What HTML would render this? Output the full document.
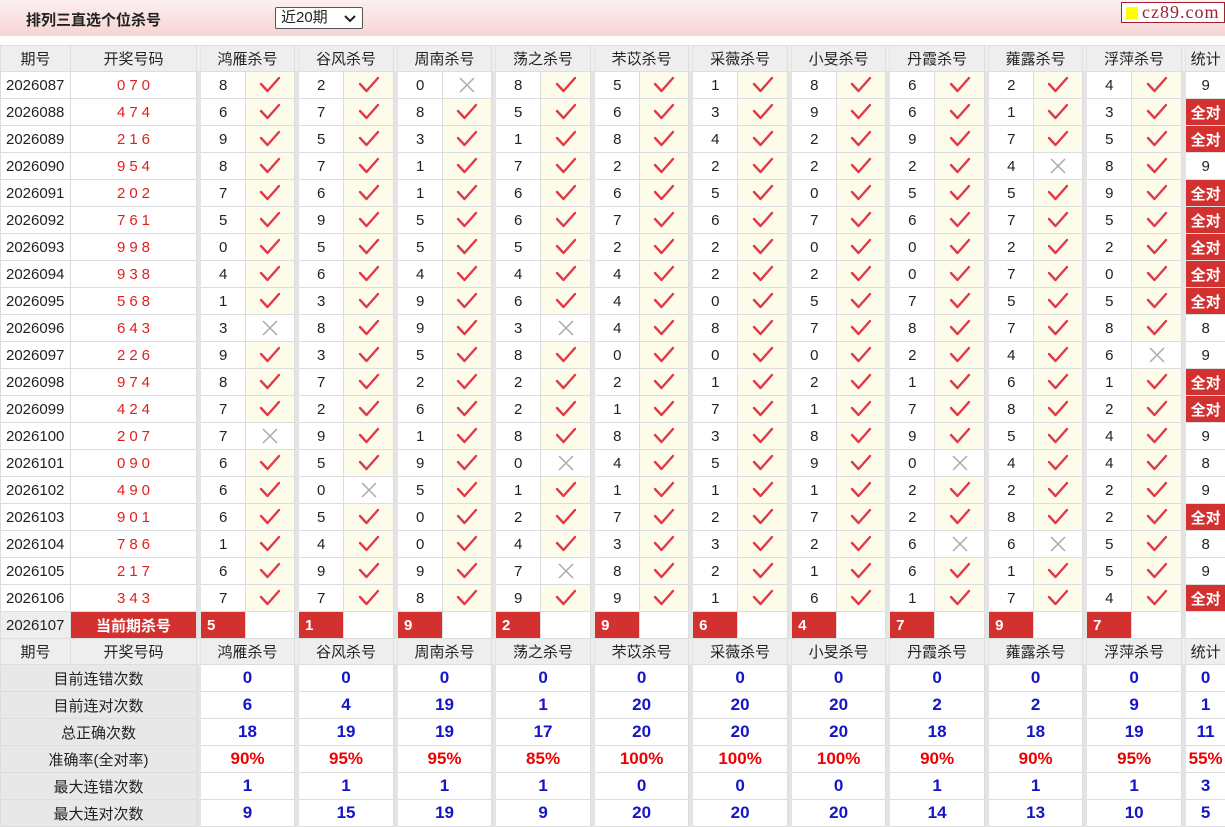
<!DOCTYPE html><html><head><meta charset="utf-8"><style>
*{margin:0;padding:0;box-sizing:border-box}
body{width:1225px;height:827px;overflow:hidden;background:#fff;font-family:"Liberation Sans","Noto Sans CJK SC",sans-serif;color:#222}
.top{position:absolute;left:0;top:0;width:1225px;height:36px;background:linear-gradient(#fdf0f0,#f6d4d4);}
.title{position:absolute;left:26px;top:9px;font-size:15px;font-weight:bold;color:#222}
.sel{position:absolute;left:275px;top:7px;width:88px;height:22px;border:1px solid #555;border-radius:2px;background:#fff;font-size:15px;padding-left:5px;line-height:20px}
.sel svg{position:absolute;right:6px;top:7px}
.logo{position:absolute;left:1121px;top:2px;width:104px;height:21px;border:1px solid #a02030;background:#fff;font-family:"Liberation Serif",serif;font-size:18px;color:#a02030;line-height:18px;padding-left:20px;letter-spacing:1px}
.logo i{position:absolute;left:4px;top:4px;width:12px;height:12px;background:#ff0}
table{position:absolute;left:0;top:45px;border-collapse:collapse;table-layout:fixed;width:1225px}
td{border:1px solid #ddd;height:27px;font-size:15px;white-space:nowrap;overflow:hidden;padding:0}
tr.h td{background:#eee;text-align:center;height:26px}
td.s{background:#e4e4e4;border-color:#e4e4e4;padding:0}
td.p{padding-left:5px}
td.k{text-align:center;color:#e02020;letter-spacing:4px;padding-left:4px}
td.n{padding-left:18px}
td.y{background:#fdfbea;text-align:center}
td.x{text-align:center}
td.t{text-align:center}
td.q{background:#d33030;color:#fff;font-weight:bold;text-align:center}
td.r{background:#d33030;color:#fff;font-weight:bold;padding-left:6px}
td.L{background:#e8e8e8;text-align:center}
td.b{text-align:center;color:#1515c8;font-weight:bold;font-size:17px}
td.c{text-align:center;color:#e00;font-weight:bold;font-size:17px}
svg.i{width:22px;height:20px;display:block;margin:0 auto}
</style></head><body>
<svg width="0" height="0" style="position:absolute"><defs>
<symbol id="c" viewBox="0 0 22 20"><path d="M2 9 L8.5 16 L20 3" fill="none" stroke="#e03a48" stroke-width="2.4" stroke-linecap="round" stroke-linejoin="round"/></symbol>
<symbol id="x" viewBox="0 0 22 20"><path d="M4 3 L18 17 M18 3 L4 17" fill="none" stroke="#aaa" stroke-width="1.5"/></symbol>
</defs></svg>
<div class="top"></div>
<div class="title">排列三直选个位杀号</div>
<div class="sel">近20期<svg width="12" height="8" viewBox="0 0 12 8"><path d="M1 1 L6 6 L11 1" fill="none" stroke="#222" stroke-width="2"/></svg></div>
<div class="logo"><i></i>cz89.com</div>
<table>
<colgroup><col style="width:70px"><col style="width:126px"><col style="width:4px">
<col style="width:45px"><col style="width:49px"><col style="width:4px">
<col style="width:45px"><col style="width:50px"><col style="width:4px">
<col style="width:45px"><col style="width:49px"><col style="width:4px">
<col style="width:45px"><col style="width:50px"><col style="width:4px">
<col style="width:45px"><col style="width:49px"><col style="width:4px">
<col style="width:45px"><col style="width:50px"><col style="width:4px">
<col style="width:45px"><col style="width:49px"><col style="width:4px">
<col style="width:45px"><col style="width:50px"><col style="width:4px">
<col style="width:45px"><col style="width:49px"><col style="width:4px">
<col style="width:45px"><col style="width:50px"><col style="width:4px">
<col style="width:40px"></colgroup>
<tr class="h"><td>期号</td><td>开奖号码</td><td class="s"></td><td colspan="2">鸿雁杀号</td><td class="s"></td><td colspan="2">谷风杀号</td><td class="s"></td><td colspan="2">周南杀号</td><td class="s"></td><td colspan="2">荡之杀号</td><td class="s"></td><td colspan="2">芣苡杀号</td><td class="s"></td><td colspan="2">采薇杀号</td><td class="s"></td><td colspan="2">小旻杀号</td><td class="s"></td><td colspan="2">丹霞杀号</td><td class="s"></td><td colspan="2">蕹露杀号</td><td class="s"></td><td colspan="2">浮萍杀号</td><td class="s"></td><td>统计</td></tr>
<tr><td class="p">2026087</td><td class="k">070</td><td class="s"></td><td class="n">8</td><td class="y"><svg class="i"><use href="#c"/></svg></td><td class="s"></td><td class="n">2</td><td class="y"><svg class="i"><use href="#c"/></svg></td><td class="s"></td><td class="n">0</td><td class="x"><svg class="i"><use href="#x"/></svg></td><td class="s"></td><td class="n">8</td><td class="y"><svg class="i"><use href="#c"/></svg></td><td class="s"></td><td class="n">5</td><td class="y"><svg class="i"><use href="#c"/></svg></td><td class="s"></td><td class="n">1</td><td class="y"><svg class="i"><use href="#c"/></svg></td><td class="s"></td><td class="n">8</td><td class="y"><svg class="i"><use href="#c"/></svg></td><td class="s"></td><td class="n">6</td><td class="y"><svg class="i"><use href="#c"/></svg></td><td class="s"></td><td class="n">2</td><td class="y"><svg class="i"><use href="#c"/></svg></td><td class="s"></td><td class="n">4</td><td class="y"><svg class="i"><use href="#c"/></svg></td><td class="s"></td><td class="t">9</td></tr>
<tr><td class="p">2026088</td><td class="k">474</td><td class="s"></td><td class="n">6</td><td class="y"><svg class="i"><use href="#c"/></svg></td><td class="s"></td><td class="n">7</td><td class="y"><svg class="i"><use href="#c"/></svg></td><td class="s"></td><td class="n">8</td><td class="y"><svg class="i"><use href="#c"/></svg></td><td class="s"></td><td class="n">5</td><td class="y"><svg class="i"><use href="#c"/></svg></td><td class="s"></td><td class="n">6</td><td class="y"><svg class="i"><use href="#c"/></svg></td><td class="s"></td><td class="n">3</td><td class="y"><svg class="i"><use href="#c"/></svg></td><td class="s"></td><td class="n">9</td><td class="y"><svg class="i"><use href="#c"/></svg></td><td class="s"></td><td class="n">6</td><td class="y"><svg class="i"><use href="#c"/></svg></td><td class="s"></td><td class="n">1</td><td class="y"><svg class="i"><use href="#c"/></svg></td><td class="s"></td><td class="n">3</td><td class="y"><svg class="i"><use href="#c"/></svg></td><td class="s"></td><td class="q">全对</td></tr>
<tr><td class="p">2026089</td><td class="k">216</td><td class="s"></td><td class="n">9</td><td class="y"><svg class="i"><use href="#c"/></svg></td><td class="s"></td><td class="n">5</td><td class="y"><svg class="i"><use href="#c"/></svg></td><td class="s"></td><td class="n">3</td><td class="y"><svg class="i"><use href="#c"/></svg></td><td class="s"></td><td class="n">1</td><td class="y"><svg class="i"><use href="#c"/></svg></td><td class="s"></td><td class="n">8</td><td class="y"><svg class="i"><use href="#c"/></svg></td><td class="s"></td><td class="n">4</td><td class="y"><svg class="i"><use href="#c"/></svg></td><td class="s"></td><td class="n">2</td><td class="y"><svg class="i"><use href="#c"/></svg></td><td class="s"></td><td class="n">9</td><td class="y"><svg class="i"><use href="#c"/></svg></td><td class="s"></td><td class="n">7</td><td class="y"><svg class="i"><use href="#c"/></svg></td><td class="s"></td><td class="n">5</td><td class="y"><svg class="i"><use href="#c"/></svg></td><td class="s"></td><td class="q">全对</td></tr>
<tr><td class="p">2026090</td><td class="k">954</td><td class="s"></td><td class="n">8</td><td class="y"><svg class="i"><use href="#c"/></svg></td><td class="s"></td><td class="n">7</td><td class="y"><svg class="i"><use href="#c"/></svg></td><td class="s"></td><td class="n">1</td><td class="y"><svg class="i"><use href="#c"/></svg></td><td class="s"></td><td class="n">7</td><td class="y"><svg class="i"><use href="#c"/></svg></td><td class="s"></td><td class="n">2</td><td class="y"><svg class="i"><use href="#c"/></svg></td><td class="s"></td><td class="n">2</td><td class="y"><svg class="i"><use href="#c"/></svg></td><td class="s"></td><td class="n">2</td><td class="y"><svg class="i"><use href="#c"/></svg></td><td class="s"></td><td class="n">2</td><td class="y"><svg class="i"><use href="#c"/></svg></td><td class="s"></td><td class="n">4</td><td class="x"><svg class="i"><use href="#x"/></svg></td><td class="s"></td><td class="n">8</td><td class="y"><svg class="i"><use href="#c"/></svg></td><td class="s"></td><td class="t">9</td></tr>
<tr><td class="p">2026091</td><td class="k">202</td><td class="s"></td><td class="n">7</td><td class="y"><svg class="i"><use href="#c"/></svg></td><td class="s"></td><td class="n">6</td><td class="y"><svg class="i"><use href="#c"/></svg></td><td class="s"></td><td class="n">1</td><td class="y"><svg class="i"><use href="#c"/></svg></td><td class="s"></td><td class="n">6</td><td class="y"><svg class="i"><use href="#c"/></svg></td><td class="s"></td><td class="n">6</td><td class="y"><svg class="i"><use href="#c"/></svg></td><td class="s"></td><td class="n">5</td><td class="y"><svg class="i"><use href="#c"/></svg></td><td class="s"></td><td class="n">0</td><td class="y"><svg class="i"><use href="#c"/></svg></td><td class="s"></td><td class="n">5</td><td class="y"><svg class="i"><use href="#c"/></svg></td><td class="s"></td><td class="n">5</td><td class="y"><svg class="i"><use href="#c"/></svg></td><td class="s"></td><td class="n">9</td><td class="y"><svg class="i"><use href="#c"/></svg></td><td class="s"></td><td class="q">全对</td></tr>
<tr><td class="p">2026092</td><td class="k">761</td><td class="s"></td><td class="n">5</td><td class="y"><svg class="i"><use href="#c"/></svg></td><td class="s"></td><td class="n">9</td><td class="y"><svg class="i"><use href="#c"/></svg></td><td class="s"></td><td class="n">5</td><td class="y"><svg class="i"><use href="#c"/></svg></td><td class="s"></td><td class="n">6</td><td class="y"><svg class="i"><use href="#c"/></svg></td><td class="s"></td><td class="n">7</td><td class="y"><svg class="i"><use href="#c"/></svg></td><td class="s"></td><td class="n">6</td><td class="y"><svg class="i"><use href="#c"/></svg></td><td class="s"></td><td class="n">7</td><td class="y"><svg class="i"><use href="#c"/></svg></td><td class="s"></td><td class="n">6</td><td class="y"><svg class="i"><use href="#c"/></svg></td><td class="s"></td><td class="n">7</td><td class="y"><svg class="i"><use href="#c"/></svg></td><td class="s"></td><td class="n">5</td><td class="y"><svg class="i"><use href="#c"/></svg></td><td class="s"></td><td class="q">全对</td></tr>
<tr><td class="p">2026093</td><td class="k">998</td><td class="s"></td><td class="n">0</td><td class="y"><svg class="i"><use href="#c"/></svg></td><td class="s"></td><td class="n">5</td><td class="y"><svg class="i"><use href="#c"/></svg></td><td class="s"></td><td class="n">5</td><td class="y"><svg class="i"><use href="#c"/></svg></td><td class="s"></td><td class="n">5</td><td class="y"><svg class="i"><use href="#c"/></svg></td><td class="s"></td><td class="n">2</td><td class="y"><svg class="i"><use href="#c"/></svg></td><td class="s"></td><td class="n">2</td><td class="y"><svg class="i"><use href="#c"/></svg></td><td class="s"></td><td class="n">0</td><td class="y"><svg class="i"><use href="#c"/></svg></td><td class="s"></td><td class="n">0</td><td class="y"><svg class="i"><use href="#c"/></svg></td><td class="s"></td><td class="n">2</td><td class="y"><svg class="i"><use href="#c"/></svg></td><td class="s"></td><td class="n">2</td><td class="y"><svg class="i"><use href="#c"/></svg></td><td class="s"></td><td class="q">全对</td></tr>
<tr><td class="p">2026094</td><td class="k">938</td><td class="s"></td><td class="n">4</td><td class="y"><svg class="i"><use href="#c"/></svg></td><td class="s"></td><td class="n">6</td><td class="y"><svg class="i"><use href="#c"/></svg></td><td class="s"></td><td class="n">4</td><td class="y"><svg class="i"><use href="#c"/></svg></td><td class="s"></td><td class="n">4</td><td class="y"><svg class="i"><use href="#c"/></svg></td><td class="s"></td><td class="n">4</td><td class="y"><svg class="i"><use href="#c"/></svg></td><td class="s"></td><td class="n">2</td><td class="y"><svg class="i"><use href="#c"/></svg></td><td class="s"></td><td class="n">2</td><td class="y"><svg class="i"><use href="#c"/></svg></td><td class="s"></td><td class="n">0</td><td class="y"><svg class="i"><use href="#c"/></svg></td><td class="s"></td><td class="n">7</td><td class="y"><svg class="i"><use href="#c"/></svg></td><td class="s"></td><td class="n">0</td><td class="y"><svg class="i"><use href="#c"/></svg></td><td class="s"></td><td class="q">全对</td></tr>
<tr><td class="p">2026095</td><td class="k">568</td><td class="s"></td><td class="n">1</td><td class="y"><svg class="i"><use href="#c"/></svg></td><td class="s"></td><td class="n">3</td><td class="y"><svg class="i"><use href="#c"/></svg></td><td class="s"></td><td class="n">9</td><td class="y"><svg class="i"><use href="#c"/></svg></td><td class="s"></td><td class="n">6</td><td class="y"><svg class="i"><use href="#c"/></svg></td><td class="s"></td><td class="n">4</td><td class="y"><svg class="i"><use href="#c"/></svg></td><td class="s"></td><td class="n">0</td><td class="y"><svg class="i"><use href="#c"/></svg></td><td class="s"></td><td class="n">5</td><td class="y"><svg class="i"><use href="#c"/></svg></td><td class="s"></td><td class="n">7</td><td class="y"><svg class="i"><use href="#c"/></svg></td><td class="s"></td><td class="n">5</td><td class="y"><svg class="i"><use href="#c"/></svg></td><td class="s"></td><td class="n">5</td><td class="y"><svg class="i"><use href="#c"/></svg></td><td class="s"></td><td class="q">全对</td></tr>
<tr><td class="p">2026096</td><td class="k">643</td><td class="s"></td><td class="n">3</td><td class="x"><svg class="i"><use href="#x"/></svg></td><td class="s"></td><td class="n">8</td><td class="y"><svg class="i"><use href="#c"/></svg></td><td class="s"></td><td class="n">9</td><td class="y"><svg class="i"><use href="#c"/></svg></td><td class="s"></td><td class="n">3</td><td class="x"><svg class="i"><use href="#x"/></svg></td><td class="s"></td><td class="n">4</td><td class="y"><svg class="i"><use href="#c"/></svg></td><td class="s"></td><td class="n">8</td><td class="y"><svg class="i"><use href="#c"/></svg></td><td class="s"></td><td class="n">7</td><td class="y"><svg class="i"><use href="#c"/></svg></td><td class="s"></td><td class="n">8</td><td class="y"><svg class="i"><use href="#c"/></svg></td><td class="s"></td><td class="n">7</td><td class="y"><svg class="i"><use href="#c"/></svg></td><td class="s"></td><td class="n">8</td><td class="y"><svg class="i"><use href="#c"/></svg></td><td class="s"></td><td class="t">8</td></tr>
<tr><td class="p">2026097</td><td class="k">226</td><td class="s"></td><td class="n">9</td><td class="y"><svg class="i"><use href="#c"/></svg></td><td class="s"></td><td class="n">3</td><td class="y"><svg class="i"><use href="#c"/></svg></td><td class="s"></td><td class="n">5</td><td class="y"><svg class="i"><use href="#c"/></svg></td><td class="s"></td><td class="n">8</td><td class="y"><svg class="i"><use href="#c"/></svg></td><td class="s"></td><td class="n">0</td><td class="y"><svg class="i"><use href="#c"/></svg></td><td class="s"></td><td class="n">0</td><td class="y"><svg class="i"><use href="#c"/></svg></td><td class="s"></td><td class="n">0</td><td class="y"><svg class="i"><use href="#c"/></svg></td><td class="s"></td><td class="n">2</td><td class="y"><svg class="i"><use href="#c"/></svg></td><td class="s"></td><td class="n">4</td><td class="y"><svg class="i"><use href="#c"/></svg></td><td class="s"></td><td class="n">6</td><td class="x"><svg class="i"><use href="#x"/></svg></td><td class="s"></td><td class="t">9</td></tr>
<tr><td class="p">2026098</td><td class="k">974</td><td class="s"></td><td class="n">8</td><td class="y"><svg class="i"><use href="#c"/></svg></td><td class="s"></td><td class="n">7</td><td class="y"><svg class="i"><use href="#c"/></svg></td><td class="s"></td><td class="n">2</td><td class="y"><svg class="i"><use href="#c"/></svg></td><td class="s"></td><td class="n">2</td><td class="y"><svg class="i"><use href="#c"/></svg></td><td class="s"></td><td class="n">2</td><td class="y"><svg class="i"><use href="#c"/></svg></td><td class="s"></td><td class="n">1</td><td class="y"><svg class="i"><use href="#c"/></svg></td><td class="s"></td><td class="n">2</td><td class="y"><svg class="i"><use href="#c"/></svg></td><td class="s"></td><td class="n">1</td><td class="y"><svg class="i"><use href="#c"/></svg></td><td class="s"></td><td class="n">6</td><td class="y"><svg class="i"><use href="#c"/></svg></td><td class="s"></td><td class="n">1</td><td class="y"><svg class="i"><use href="#c"/></svg></td><td class="s"></td><td class="q">全对</td></tr>
<tr><td class="p">2026099</td><td class="k">424</td><td class="s"></td><td class="n">7</td><td class="y"><svg class="i"><use href="#c"/></svg></td><td class="s"></td><td class="n">2</td><td class="y"><svg class="i"><use href="#c"/></svg></td><td class="s"></td><td class="n">6</td><td class="y"><svg class="i"><use href="#c"/></svg></td><td class="s"></td><td class="n">2</td><td class="y"><svg class="i"><use href="#c"/></svg></td><td class="s"></td><td class="n">1</td><td class="y"><svg class="i"><use href="#c"/></svg></td><td class="s"></td><td class="n">7</td><td class="y"><svg class="i"><use href="#c"/></svg></td><td class="s"></td><td class="n">1</td><td class="y"><svg class="i"><use href="#c"/></svg></td><td class="s"></td><td class="n">7</td><td class="y"><svg class="i"><use href="#c"/></svg></td><td class="s"></td><td class="n">8</td><td class="y"><svg class="i"><use href="#c"/></svg></td><td class="s"></td><td class="n">2</td><td class="y"><svg class="i"><use href="#c"/></svg></td><td class="s"></td><td class="q">全对</td></tr>
<tr><td class="p">2026100</td><td class="k">207</td><td class="s"></td><td class="n">7</td><td class="x"><svg class="i"><use href="#x"/></svg></td><td class="s"></td><td class="n">9</td><td class="y"><svg class="i"><use href="#c"/></svg></td><td class="s"></td><td class="n">1</td><td class="y"><svg class="i"><use href="#c"/></svg></td><td class="s"></td><td class="n">8</td><td class="y"><svg class="i"><use href="#c"/></svg></td><td class="s"></td><td class="n">8</td><td class="y"><svg class="i"><use href="#c"/></svg></td><td class="s"></td><td class="n">3</td><td class="y"><svg class="i"><use href="#c"/></svg></td><td class="s"></td><td class="n">8</td><td class="y"><svg class="i"><use href="#c"/></svg></td><td class="s"></td><td class="n">9</td><td class="y"><svg class="i"><use href="#c"/></svg></td><td class="s"></td><td class="n">5</td><td class="y"><svg class="i"><use href="#c"/></svg></td><td class="s"></td><td class="n">4</td><td class="y"><svg class="i"><use href="#c"/></svg></td><td class="s"></td><td class="t">9</td></tr>
<tr><td class="p">2026101</td><td class="k">090</td><td class="s"></td><td class="n">6</td><td class="y"><svg class="i"><use href="#c"/></svg></td><td class="s"></td><td class="n">5</td><td class="y"><svg class="i"><use href="#c"/></svg></td><td class="s"></td><td class="n">9</td><td class="y"><svg class="i"><use href="#c"/></svg></td><td class="s"></td><td class="n">0</td><td class="x"><svg class="i"><use href="#x"/></svg></td><td class="s"></td><td class="n">4</td><td class="y"><svg class="i"><use href="#c"/></svg></td><td class="s"></td><td class="n">5</td><td class="y"><svg class="i"><use href="#c"/></svg></td><td class="s"></td><td class="n">9</td><td class="y"><svg class="i"><use href="#c"/></svg></td><td class="s"></td><td class="n">0</td><td class="x"><svg class="i"><use href="#x"/></svg></td><td class="s"></td><td class="n">4</td><td class="y"><svg class="i"><use href="#c"/></svg></td><td class="s"></td><td class="n">4</td><td class="y"><svg class="i"><use href="#c"/></svg></td><td class="s"></td><td class="t">8</td></tr>
<tr><td class="p">2026102</td><td class="k">490</td><td class="s"></td><td class="n">6</td><td class="y"><svg class="i"><use href="#c"/></svg></td><td class="s"></td><td class="n">0</td><td class="x"><svg class="i"><use href="#x"/></svg></td><td class="s"></td><td class="n">5</td><td class="y"><svg class="i"><use href="#c"/></svg></td><td class="s"></td><td class="n">1</td><td class="y"><svg class="i"><use href="#c"/></svg></td><td class="s"></td><td class="n">1</td><td class="y"><svg class="i"><use href="#c"/></svg></td><td class="s"></td><td class="n">1</td><td class="y"><svg class="i"><use href="#c"/></svg></td><td class="s"></td><td class="n">1</td><td class="y"><svg class="i"><use href="#c"/></svg></td><td class="s"></td><td class="n">2</td><td class="y"><svg class="i"><use href="#c"/></svg></td><td class="s"></td><td class="n">2</td><td class="y"><svg class="i"><use href="#c"/></svg></td><td class="s"></td><td class="n">2</td><td class="y"><svg class="i"><use href="#c"/></svg></td><td class="s"></td><td class="t">9</td></tr>
<tr><td class="p">2026103</td><td class="k">901</td><td class="s"></td><td class="n">6</td><td class="y"><svg class="i"><use href="#c"/></svg></td><td class="s"></td><td class="n">5</td><td class="y"><svg class="i"><use href="#c"/></svg></td><td class="s"></td><td class="n">0</td><td class="y"><svg class="i"><use href="#c"/></svg></td><td class="s"></td><td class="n">2</td><td class="y"><svg class="i"><use href="#c"/></svg></td><td class="s"></td><td class="n">7</td><td class="y"><svg class="i"><use href="#c"/></svg></td><td class="s"></td><td class="n">2</td><td class="y"><svg class="i"><use href="#c"/></svg></td><td class="s"></td><td class="n">7</td><td class="y"><svg class="i"><use href="#c"/></svg></td><td class="s"></td><td class="n">2</td><td class="y"><svg class="i"><use href="#c"/></svg></td><td class="s"></td><td class="n">8</td><td class="y"><svg class="i"><use href="#c"/></svg></td><td class="s"></td><td class="n">2</td><td class="y"><svg class="i"><use href="#c"/></svg></td><td class="s"></td><td class="q">全对</td></tr>
<tr><td class="p">2026104</td><td class="k">786</td><td class="s"></td><td class="n">1</td><td class="y"><svg class="i"><use href="#c"/></svg></td><td class="s"></td><td class="n">4</td><td class="y"><svg class="i"><use href="#c"/></svg></td><td class="s"></td><td class="n">0</td><td class="y"><svg class="i"><use href="#c"/></svg></td><td class="s"></td><td class="n">4</td><td class="y"><svg class="i"><use href="#c"/></svg></td><td class="s"></td><td class="n">3</td><td class="y"><svg class="i"><use href="#c"/></svg></td><td class="s"></td><td class="n">3</td><td class="y"><svg class="i"><use href="#c"/></svg></td><td class="s"></td><td class="n">2</td><td class="y"><svg class="i"><use href="#c"/></svg></td><td class="s"></td><td class="n">6</td><td class="x"><svg class="i"><use href="#x"/></svg></td><td class="s"></td><td class="n">6</td><td class="x"><svg class="i"><use href="#x"/></svg></td><td class="s"></td><td class="n">5</td><td class="y"><svg class="i"><use href="#c"/></svg></td><td class="s"></td><td class="t">8</td></tr>
<tr><td class="p">2026105</td><td class="k">217</td><td class="s"></td><td class="n">6</td><td class="y"><svg class="i"><use href="#c"/></svg></td><td class="s"></td><td class="n">9</td><td class="y"><svg class="i"><use href="#c"/></svg></td><td class="s"></td><td class="n">9</td><td class="y"><svg class="i"><use href="#c"/></svg></td><td class="s"></td><td class="n">7</td><td class="x"><svg class="i"><use href="#x"/></svg></td><td class="s"></td><td class="n">8</td><td class="y"><svg class="i"><use href="#c"/></svg></td><td class="s"></td><td class="n">2</td><td class="y"><svg class="i"><use href="#c"/></svg></td><td class="s"></td><td class="n">1</td><td class="y"><svg class="i"><use href="#c"/></svg></td><td class="s"></td><td class="n">6</td><td class="y"><svg class="i"><use href="#c"/></svg></td><td class="s"></td><td class="n">1</td><td class="y"><svg class="i"><use href="#c"/></svg></td><td class="s"></td><td class="n">5</td><td class="y"><svg class="i"><use href="#c"/></svg></td><td class="s"></td><td class="t">9</td></tr>
<tr><td class="p">2026106</td><td class="k">343</td><td class="s"></td><td class="n">7</td><td class="y"><svg class="i"><use href="#c"/></svg></td><td class="s"></td><td class="n">7</td><td class="y"><svg class="i"><use href="#c"/></svg></td><td class="s"></td><td class="n">8</td><td class="y"><svg class="i"><use href="#c"/></svg></td><td class="s"></td><td class="n">9</td><td class="y"><svg class="i"><use href="#c"/></svg></td><td class="s"></td><td class="n">9</td><td class="y"><svg class="i"><use href="#c"/></svg></td><td class="s"></td><td class="n">1</td><td class="y"><svg class="i"><use href="#c"/></svg></td><td class="s"></td><td class="n">6</td><td class="y"><svg class="i"><use href="#c"/></svg></td><td class="s"></td><td class="n">1</td><td class="y"><svg class="i"><use href="#c"/></svg></td><td class="s"></td><td class="n">7</td><td class="y"><svg class="i"><use href="#c"/></svg></td><td class="s"></td><td class="n">4</td><td class="y"><svg class="i"><use href="#c"/></svg></td><td class="s"></td><td class="q">全对</td></tr>
<tr><td class="p" style="background:#eee">2026107</td><td class="q">当前期杀号</td><td class="s"></td><td class="r">5</td><td></td><td class="s"></td><td class="r">1</td><td></td><td class="s"></td><td class="r">9</td><td></td><td class="s"></td><td class="r">2</td><td></td><td class="s"></td><td class="r">9</td><td></td><td class="s"></td><td class="r">6</td><td></td><td class="s"></td><td class="r">4</td><td></td><td class="s"></td><td class="r">7</td><td></td><td class="s"></td><td class="r">9</td><td></td><td class="s"></td><td class="r">7</td><td></td><td class="s"></td><td></td></tr>
<tr class="h"><td>期号</td><td>开奖号码</td><td class="s"></td><td colspan="2">鸿雁杀号</td><td class="s"></td><td colspan="2">谷风杀号</td><td class="s"></td><td colspan="2">周南杀号</td><td class="s"></td><td colspan="2">荡之杀号</td><td class="s"></td><td colspan="2">芣苡杀号</td><td class="s"></td><td colspan="2">采薇杀号</td><td class="s"></td><td colspan="2">小旻杀号</td><td class="s"></td><td colspan="2">丹霞杀号</td><td class="s"></td><td colspan="2">蕹露杀号</td><td class="s"></td><td colspan="2">浮萍杀号</td><td class="s"></td><td>统计</td></tr>
<tr><td class="L" colspan="2">目前连错次数</td><td class="s"></td><td class="b" colspan="2">0</td><td class="s"></td><td class="b" colspan="2">0</td><td class="s"></td><td class="b" colspan="2">0</td><td class="s"></td><td class="b" colspan="2">0</td><td class="s"></td><td class="b" colspan="2">0</td><td class="s"></td><td class="b" colspan="2">0</td><td class="s"></td><td class="b" colspan="2">0</td><td class="s"></td><td class="b" colspan="2">0</td><td class="s"></td><td class="b" colspan="2">0</td><td class="s"></td><td class="b" colspan="2">0</td><td class="s"></td><td class="b">0</td></tr>
<tr><td class="L" colspan="2">目前连对次数</td><td class="s"></td><td class="b" colspan="2">6</td><td class="s"></td><td class="b" colspan="2">4</td><td class="s"></td><td class="b" colspan="2">19</td><td class="s"></td><td class="b" colspan="2">1</td><td class="s"></td><td class="b" colspan="2">20</td><td class="s"></td><td class="b" colspan="2">20</td><td class="s"></td><td class="b" colspan="2">20</td><td class="s"></td><td class="b" colspan="2">2</td><td class="s"></td><td class="b" colspan="2">2</td><td class="s"></td><td class="b" colspan="2">9</td><td class="s"></td><td class="b">1</td></tr>
<tr><td class="L" colspan="2">总正确次数</td><td class="s"></td><td class="b" colspan="2">18</td><td class="s"></td><td class="b" colspan="2">19</td><td class="s"></td><td class="b" colspan="2">19</td><td class="s"></td><td class="b" colspan="2">17</td><td class="s"></td><td class="b" colspan="2">20</td><td class="s"></td><td class="b" colspan="2">20</td><td class="s"></td><td class="b" colspan="2">20</td><td class="s"></td><td class="b" colspan="2">18</td><td class="s"></td><td class="b" colspan="2">18</td><td class="s"></td><td class="b" colspan="2">19</td><td class="s"></td><td class="b">11</td></tr>
<tr><td class="L" colspan="2">准确率(全对率)</td><td class="s"></td><td class="c" colspan="2">90%</td><td class="s"></td><td class="c" colspan="2">95%</td><td class="s"></td><td class="c" colspan="2">95%</td><td class="s"></td><td class="c" colspan="2">85%</td><td class="s"></td><td class="c" colspan="2">100%</td><td class="s"></td><td class="c" colspan="2">100%</td><td class="s"></td><td class="c" colspan="2">100%</td><td class="s"></td><td class="c" colspan="2">90%</td><td class="s"></td><td class="c" colspan="2">90%</td><td class="s"></td><td class="c" colspan="2">95%</td><td class="s"></td><td class="c">55%</td></tr>
<tr><td class="L" colspan="2">最大连错次数</td><td class="s"></td><td class="b" colspan="2">1</td><td class="s"></td><td class="b" colspan="2">1</td><td class="s"></td><td class="b" colspan="2">1</td><td class="s"></td><td class="b" colspan="2">1</td><td class="s"></td><td class="b" colspan="2">0</td><td class="s"></td><td class="b" colspan="2">0</td><td class="s"></td><td class="b" colspan="2">0</td><td class="s"></td><td class="b" colspan="2">1</td><td class="s"></td><td class="b" colspan="2">1</td><td class="s"></td><td class="b" colspan="2">1</td><td class="s"></td><td class="b">3</td></tr>
<tr><td class="L" colspan="2">最大连对次数</td><td class="s"></td><td class="b" colspan="2">9</td><td class="s"></td><td class="b" colspan="2">15</td><td class="s"></td><td class="b" colspan="2">19</td><td class="s"></td><td class="b" colspan="2">9</td><td class="s"></td><td class="b" colspan="2">20</td><td class="s"></td><td class="b" colspan="2">20</td><td class="s"></td><td class="b" colspan="2">20</td><td class="s"></td><td class="b" colspan="2">14</td><td class="s"></td><td class="b" colspan="2">13</td><td class="s"></td><td class="b" colspan="2">10</td><td class="s"></td><td class="b">5</td></tr>
</table>
</body></html>
